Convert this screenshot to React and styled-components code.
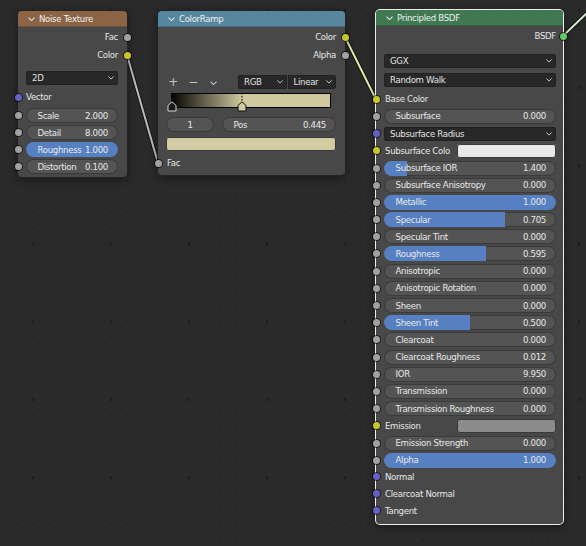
import React from "react";
import styled, { createGlobalStyle } from "styled-components";

const FLOAT = "#a1a1a1";
const COLOR = "#c7c729";
const VECTOR = "#6363c7";
const SHADER = "#63c763";

const GlobalStyle = createGlobalStyle`
  html, body {
    margin: 0;
    padding: 0;
    background: #2a2a2a;
  }
  body {
    font-family: "DejaVu Sans", "Liberation Sans", sans-serif;
  }
  * {
    box-sizing: border-box;
  }
`;

const Canvas = styled.div`
  position: relative;
  width: 586px;
  height: 546px;
  overflow: hidden;
  background-color: #2a2a2a;
  background-image: radial-gradient(circle, #1c1c1c 1.3px, transparent 1.6px),
    radial-gradient(circle, #232323 0.9px, transparent 1.1px);
  background-size: 78px 78px, 15.6px 15.6px;
  background-position: -6px -29px, -5.8px 1.6px;
`;

const LinkLayer = styled.svg`
  position: absolute;
  left: 0;
  top: 0;
  width: 586px;
  height: 546px;
  pointer-events: none;
`;

const NodeFrame = styled.div`
  --pl: ${(p) => p.$pl}px;
  --pr: ${(p) => p.$pr}px;
  position: absolute;
  left: ${(p) => p.$x}px;
  top: ${(p) => p.$y}px;
  width: ${(p) => p.$w}px;
  background: #484848;
  border-radius: 4px;
  color: #e6e6e6;
  font-size: 8.6px;
  letter-spacing: -0.32px;
  box-shadow: ${(p) => (p.$active ? "0 0 0 1px #eeeeee" : "0 0 0 1px #232323")},
    0 3px 8px rgba(0, 0, 0, 0.45);
`;

const Header = styled.div`
  display: flex;
  align-items: center;
  gap: 4px;
  height: 16px;
  padding-left: 10px;
  background: ${(p) => p.$color};
  border-radius: 4px 4px 0 0;
  color: #f0f0f0;
  box-shadow: inset 0 -1px 0 rgba(0, 0, 0, 0.18);
`;

const Body = styled.div`
  display: flex;
  flex-direction: column;
  padding: 1px 0 ${(p) => p.$pb}px;
`;

const Row = styled.div`
  position: relative;
  display: flex;
  align-items: center;
  justify-content: ${(p) => (p.$out ? "flex-end" : "flex-start")};
  gap: ${(p) => p.$gap || 0}px;
  height: ${(p) => p.$h || 15}px;
  margin-top: ${(p) => p.$mt || 0}px;
  padding: 0 var(--pr) 0 var(--pl);
`;

const Label = styled.span`
  white-space: nowrap;
  padding-left: ${(p) => p.$indent || 0}px;
  flex: ${(p) => (p.$grow ? 1 : "none")};
`;

const Socket = styled.span`
  position: absolute;
  top: 50%;
  ${(p) => (p.$out ? "right: -3.5px;" : "left: -3.5px;")}
  width: 7px;
  height: 7px;
  margin-top: -3.5px;
  border-radius: 50%;
  background: ${(p) => p.$color};
  box-shadow: 0 0 0 1px rgba(0, 0, 0, 0.6);
`;

const Field = styled.div`
  position: relative;
  flex: ${(p) => (p.$w ? "none" : 1)};
  width: ${(p) => (p.$w ? `${p.$w}px` : "auto")};
  height: 15px;
  border-radius: 7.5px;
  overflow: hidden;
  background: #545454;
  box-shadow: inset 0 0 0 1px #3a3a3a;
  display: flex;
  align-items: center;
  justify-content: ${(p) => (p.$center ? "center" : "space-between")};
  padding: ${(p) => (p.$center ? "0" : "0 10px 0 11.5px")};
  color: #e8e8e8;
`;

const Fill = styled.div`
  position: absolute;
  left: 0;
  top: 0;
  bottom: 0;
  background: #5680c2;
`;

const FieldText = styled.span`
  position: relative;
  white-space: nowrap;
`;

const Select = styled.div`
  flex: 1;
  height: 14px;
  background: #282828;
  border-radius: ${(p) => p.$radius || "3px"};
  display: flex;
  align-items: center;
  justify-content: space-between;
  padding: 0 4px 0 6px;
  box-shadow: inset 0 0 0 1px #222222;
  color: #e2e2e2;
`;

const Swatch = styled.div`
  flex: ${(p) => (p.$w ? "none" : 1)};
  width: ${(p) => (p.$w ? `${p.$w}px` : "auto")};
  height: 14px;
  border-radius: 3px;
  background: ${(p) => p.$color};
  box-shadow: inset 0 0 0 1px #3a3a3a;
`;

const ToolGlyph = styled.span`
  width: 14px;
  text-align: center;
  color: #c4c4c4;
  font-size: 12px;
  line-height: 14px;
`;

const SelectGroup = styled.div`
  display: flex;
  gap: 1px;
  width: 98px;
  margin-left: auto;
`;

const RampWrap = styled.div`
  position: relative;
  height: 15px;
  margin: 4px calc(var(--pr) + 5px) 0 calc(var(--pl) + 5px);
`;

const RampBar = styled.div`
  height: 15px;
  border: 1px solid #000;
  background: linear-gradient(to right, #050503 0%, #d0c9a0 44.5%, #d0c9a0 100%);
`;

const Marker = styled.svg`
  position: absolute;
  top: 8px;
  left: ${(p) => p.$at};
  margin-left: -5px;
  overflow: visible;
`;

const Chevron = ({ w = 6, color = "#d6d6d6" }) => (
  <svg width={w} height={w * 0.65} viewBox="0 0 6 4">
    <path
      d="M0.6 0.7 L3 3.2 L5.4 0.7"
      fill="none"
      stroke={color}
      strokeWidth="0.9"
      strokeLinecap="round"
      strokeLinejoin="round"
    />
  </svg>
);

const NodeHeader = ({ color, title }) => (
  <Header $color={color}>
    <Chevron w={7} color="#e6e6e6" />
    <span>{title}</span>
  </Header>
);

const OutRow = ({ label, color }) => (
  <Row $out $h={18}>
    <Label>{label}</Label>
    <Socket $out $color={color} />
  </Row>
);

const Slider = ({ label, value, fill = 0 }) => (
  <Field>
    {fill > 0 && <Fill style={{ width: `${fill * 100}%` }} />}
    <FieldText>{label}</FieldText>
    <FieldText>{value}</FieldText>
  </Field>
);

const Dropdown = ({ label, radius }) => (
  <Select $radius={radius}>
    <span>{label}</span>
    <Chevron w={6} />
  </Select>
);

const noiseInputs = [
  { label: "Scale", value: "2.000" },
  { label: "Detail", value: "8.000" },
  { label: "Roughness", value: "1.000", fill: 1 },
  { label: "Distortion", value: "0.100" },
];

const bsdfRows = [
  { kind: "slider", label: "Subsurface", value: "0.000" },
  { kind: "select", label: "Subsurface Radius", sock: VECTOR },
  { kind: "color", label: "Subsurface Colo", swatch: "#e8e8e8", sock: COLOR },
  { kind: "slider", label: "Subsurface IOR", value: "1.400", fill: 0.133 },
  { kind: "slider", label: "Subsurface Anisotropy", value: "0.000" },
  { kind: "slider", label: "Metallic", value: "1.000", fill: 1 },
  { kind: "slider", label: "Specular", value: "0.705", fill: 0.705 },
  { kind: "slider", label: "Specular Tint", value: "0.000" },
  { kind: "slider", label: "Roughness", value: "0.595", fill: 0.595 },
  { kind: "slider", label: "Anisotropic", value: "0.000" },
  { kind: "slider", label: "Anisotropic Rotation", value: "0.000" },
  { kind: "slider", label: "Sheen", value: "0.000" },
  { kind: "slider", label: "Sheen Tint", value: "0.500", fill: 0.5 },
  { kind: "slider", label: "Clearcoat", value: "0.000" },
  { kind: "slider", label: "Clearcoat Roughness", value: "0.012" },
  { kind: "slider", label: "IOR", value: "9.950" },
  { kind: "slider", label: "Transmission", value: "0.000" },
  { kind: "slider", label: "Transmission Roughness", value: "0.000" },
  { kind: "color", label: "Emission", swatch: "#8c8c8c", sock: COLOR },
  { kind: "slider", label: "Emission Strength", value: "0.000" },
  { kind: "slider", label: "Alpha", value: "1.000", fill: 1 },
];

const bsdfVectors = ["Normal", "Clearcoat Normal", "Tangent"];

const Links = () => (
  <LinkLayer viewBox="0 0 586 546">
    <g fill="none" strokeLinecap="round">
      <line x1="127" y1="55" x2="158" y2="163" stroke="rgba(0,0,0,0.55)" strokeWidth="4" />
      <line x1="127" y1="55" x2="158" y2="163" stroke="#bdbdbd" strokeWidth="2" />
      <line x1="345" y1="37" x2="376" y2="99.5" stroke="rgba(0,0,0,0.55)" strokeWidth="4" />
      <line x1="345" y1="37" x2="376" y2="99.5" stroke="#e6e6a9" strokeWidth="2" />
      <line x1="563" y1="36" x2="592" y2="8" stroke="rgba(0,0,0,0.55)" strokeWidth="4" />
      <line x1="563" y1="36" x2="592" y2="8" stroke="#d9ecd2" strokeWidth="2" />
    </g>
  </LinkLayer>
);

const NoiseNode = () => (
  <NodeFrame $x={18} $y={11} $w={109} $pl={8} $pr={9}>
    <NodeHeader color="#8b6446" title="Noise Texture" />
    <Body $pb={3}>
      <OutRow label="Fac" color={FLOAT} />
      <OutRow label="Color" color={COLOR} />
      <Row $mt={7} $h={14}>
        <Dropdown label="2D" />
      </Row>
      <Row $mt={3} $h={18}>
        <Socket $color={VECTOR} />
        <Label>Vector</Label>
      </Row>
      {noiseInputs.map((r) => (
        <Row key={r.label} $mt={2}>
          <Socket $color={FLOAT} />
          <Slider label={r.label} value={r.value} fill={r.fill} />
        </Row>
      ))}
    </Body>
  </NodeFrame>
);

const ColorRampNode = () => (
  <NodeFrame $x={158} $y={11} $w={187} $pl={8} $pr={9}>
    <NodeHeader color="#57869f" title="ColorRamp" />
    <Body $pb={4}>
      <OutRow label="Color" color={COLOR} />
      <OutRow label="Alpha" color={FLOAT} />
      <Row $mt={11} $h={14} $gap={6}>
        <ToolGlyph>+</ToolGlyph>
        <ToolGlyph>−</ToolGlyph>
        <ToolGlyph>
          <Chevron w={7} color="#c4c4c4" />
        </ToolGlyph>
        <SelectGroup>
          <Dropdown label="RGB" radius="3px 0 0 3px" />
          <Dropdown label="Linear" radius="0 3px 3px 0" />
        </SelectGroup>
      </Row>
      <RampWrap>
        <RampBar />
        <Marker $at="1px" width="10" height="11" viewBox="0 0 10 11">
          <path d="M1 4.5 L5 0.8 L9 4.5 L9 10 L1 10 Z" fill="#1a1a1a" stroke="#d8d8d8" strokeWidth="1" />
        </Marker>
        <Marker $at="44.5%" width="10" height="11" viewBox="0 0 10 11">
          <path d="M5 -8 L5 0" stroke="#000" strokeWidth="1" strokeDasharray="1.5 1.5" />
          <path d="M1 4.5 L5 0.8 L9 4.5 L9 10 L1 10 Z" fill="#d0c9a0" stroke="#111" strokeWidth="1" />
        </Marker>
      </RampWrap>
      <Row $mt={9} $gap={8}>
        <Field $w={48} $center>
          <FieldText>1</FieldText>
        </Field>
        <Slider label="Pos" value="0.445" />
      </Row>
      <Row $mt={5} $h={14}>
        <Swatch $color="#d3cca3" />
      </Row>
      <Row $mt={4} $h={16}>
        <Socket $color={FLOAT} />
        <Label $indent={1}>Fac</Label>
      </Row>
    </Body>
  </NodeFrame>
);

const BsdfRow = ({ row }) => {
  if (row.kind === "select") {
    return (
      <Row $mt={2.2}>
        <Socket $color={row.sock} />
        <Dropdown label={row.label} />
      </Row>
    );
  }
  if (row.kind === "color") {
    return (
      <Row $mt={2.2}>
        <Socket $color={row.sock} />
        <Label $indent={1} $grow>
          {row.label}
        </Label>
        <Swatch $w={99} $color={row.swatch} />
      </Row>
    );
  }
  return (
    <Row $mt={2.2}>
      <Socket $color={FLOAT} />
      <Slider label={row.label} value={row.value} fill={row.fill} />
    </Row>
  );
};

const PrincipledNode = () => (
  <NodeFrame $x={376} $y={10} $w={187} $pl={8} $pr={7} $active>
    <NodeHeader color="#3f7851" title="Principled BSDF" />
    <Body $pb={4.5}>
      <OutRow label="BSDF" color={SHADER} />
      <Row $mt={9} $h={14}>
        <Dropdown label="GGX" />
      </Row>
      <Row $mt={5} $h={14}>
        <Dropdown label="Random Walk" />
      </Row>
      <Row $mt={4.8}>
        <Socket $color={COLOR} />
        <Label $indent={1}>Base Color</Label>
      </Row>
      {bsdfRows.map((r) => (
        <BsdfRow key={r.label} row={r} />
      ))}
      {bsdfVectors.map((name, i) => (
        <Row key={name} $h={17} $mt={i === 0 ? 0.5 : 0}>
          <Socket $color={VECTOR} />
          <Label $indent={1}>{name}</Label>
        </Row>
      ))}
    </Body>
  </NodeFrame>
);

const App = () => (
  <>
    <GlobalStyle />
    <Canvas>
      <Links />
      <NoiseNode />
      <ColorRampNode />
      <PrincipledNode />
    </Canvas>
  </>
);

export default App;
